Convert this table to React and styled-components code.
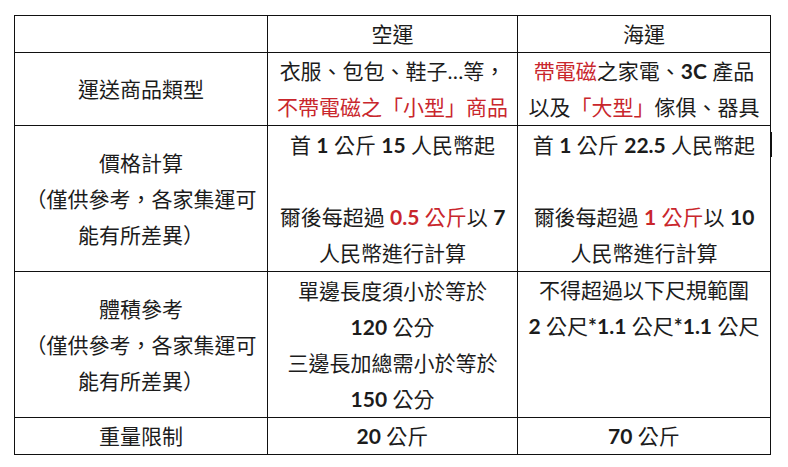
import React from "react";
import styled, { createGlobalStyle } from "styled-components";

const Global = createGlobalStyle`
  html, body { margin: 0; padding: 0; background: #fff; }
  body { font-family: "Lato", "Noto Sans CJK TC", sans-serif; color: #1c1c1c; }
`;

const Page = styled.div`
  padding: 15px 0 0 14px;
`;

const Table = styled.table`
  border-collapse: collapse;
  table-layout: fixed;
  width: 756px;
  border: 1px solid #111;
`;

const Row = styled.tr`
  height: ${(p) => p.$h}px;
`;

const Cell = styled.td`
  position: relative;
  border: 1px solid #111;
  padding: 0;
  text-align: center;
  vertical-align: ${(p) => (p.$top ? "top" : "middle")};
  font-size: 21px;
  line-height: 36px;
  white-space: nowrap;
  ${(p) =>
    p.$mark &&
    `
    &::after {
      content: "";
      position: absolute;
      right: -2px;
      top: 6px;
      width: 2px;
      height: 25px;
      background: #111;
    }
  `}
`;

const Line = styled.span`
  display: block;
`;

const Red = styled.span`
  color: #c9262c;
`;

const Num = styled.span`
  font-family: "Lato", sans-serif;
  font-weight: 700;
`;

const Blank = () => <Line>&nbsp;</Line>;

const Note = () => (
  <>
    <Line>（僅供參考，各家集運可</Line>
    <Line>能有所差異）</Line>
  </>
);

export default function App() {
  return (
    <Page>
      <Global />
      <Table>
        <colgroup>
          <col style={{ width: 253 }} />
          <col style={{ width: 250 }} />
          <col style={{ width: 253 }} />
        </colgroup>
        <tbody>
          <Row $h={37}>
            <Cell />
            <Cell>空運</Cell>
            <Cell>海運</Cell>
          </Row>
          <Row $h={73}>
            <Cell>運送商品類型</Cell>
            <Cell>
              <Line>衣服、包包、鞋子…等，</Line>
              <Line>
                <Red>不帶電磁之「小型」商品</Red>
              </Line>
            </Cell>
            <Cell>
              <Line>
                <Red>帶電磁</Red>之家電、<Num>3C</Num> 產品
              </Line>
              <Line>
                以及<Red>「大型」</Red>傢俱、器具
              </Line>
            </Cell>
          </Row>
          <Row $h={146}>
            <Cell>
              <Line>價格計算</Line>
              <Note />
            </Cell>
            <Cell>
              <Line>
                首 <Num>1</Num> 公斤 <Num>15</Num> 人民幣起
              </Line>
              <Blank />
              <Line>
                爾後每超過{" "}
                <Red>
                  <Num>0.5</Num> 公斤
                </Red>
                以 <Num>7</Num>
              </Line>
              <Line>人民幣進行計算</Line>
            </Cell>
            <Cell $mark>
              <Line>
                首 <Num>1</Num> 公斤 <Num>22.5</Num> 人民幣起
              </Line>
              <Blank />
              <Line>
                爾後每超過{" "}
                <Red>
                  <Num>1</Num> 公斤
                </Red>
                以 <Num>10</Num>
              </Line>
              <Line>人民幣進行計算</Line>
            </Cell>
          </Row>
          <Row $h={146}>
            <Cell>
              <Line>體積參考</Line>
              <Note />
            </Cell>
            <Cell>
              <Line>單邊長度須小於等於</Line>
              <Line>
                <Num>120</Num> 公分
              </Line>
              <Line>三邊長加總需小於等於</Line>
              <Line>
                <Num>150</Num> 公分
              </Line>
            </Cell>
            <Cell $top>
              <Line>不得超過以下尺規範圍</Line>
              <Line>
                <Num>2</Num> 公尺<Num>*1.1</Num> 公尺<Num>*1.1</Num> 公尺
              </Line>
            </Cell>
          </Row>
          <Row $h={36}>
            <Cell>重量限制</Cell>
            <Cell>
              <Num>20</Num> 公斤
            </Cell>
            <Cell>
              <Num>70</Num> 公斤
            </Cell>
          </Row>
        </tbody>
      </Table>
    </Page>
  );
}
